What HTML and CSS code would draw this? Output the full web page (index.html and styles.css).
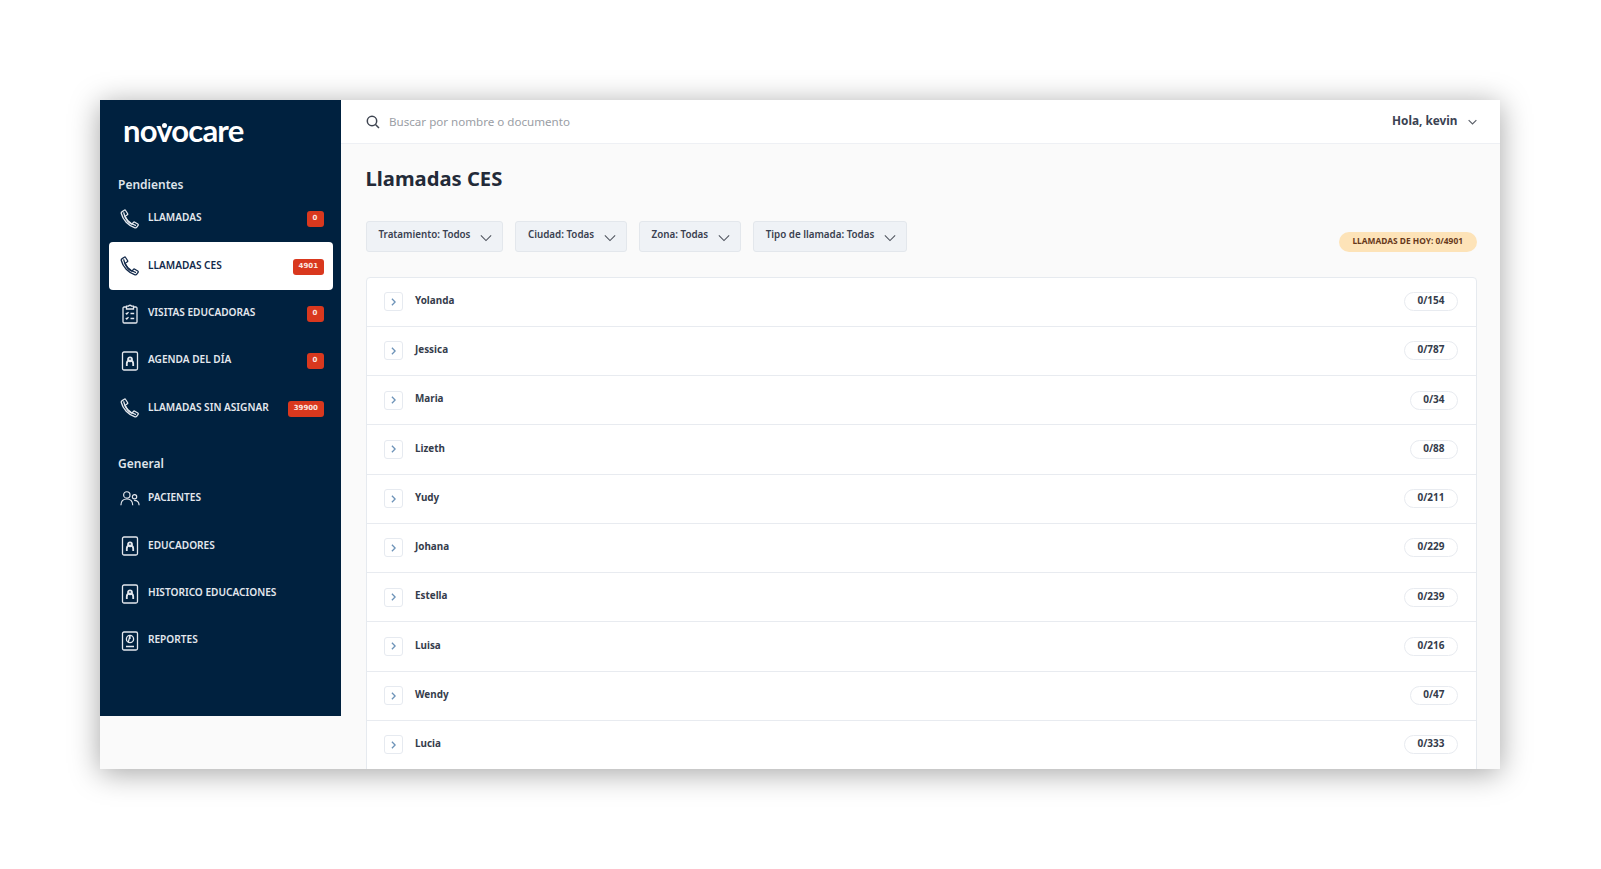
FILE: index.html
```html
<!DOCTYPE html>
<html lang="es">
<head>
<meta charset="utf-8">
<title>Novocare - Llamadas CES</title>
<link rel="stylesheet" href="styles.css">
</head>
<body>
<svg class="defs" width="0" height="0" aria-hidden="true">
  <symbol id="i-phone" viewBox="0 0 20 20"><path d="M2.200 2.600 4.300 1.200c.5-.3 1-.2 1.300.3l1.900 3c.3.500.2 1-.2 1.300L5.600 7c-.3.200-.4.600-.3 1 .9 2.600 3.300 5.500 6 7 .4.200.8.100 1-.2l1.100-1.400c.4-.4.900-.5 1.400-.2l3 1.800c.5.300.6.900.3 1.300l-1.300 1.900c-.4.600-1.100.8-1.800.6C8.300 16.800 2.800 10.800 1.300 4.500c-.2-.7.200-1.500.9-1.900Z"/><path d="M3.600 3.300C4.300 8.600 9.500 15 16 16.600"/></symbol>
  <symbol id="i-clip" viewBox="0 0 20 20"><path d="M6.500 3H4.200c-.7 0-1.200.5-1.200 1.200v13.600c0 .7.500 1.200 1.200 1.200h11.600c.7 0 1.200-.5 1.200-1.200V4.200c0-.7-.5-1.200-1.200-1.200h-2.300"/><path d="M6.500 2.200h2c.2-1.300 2.800-1.300 3 0h2v2.800h-7Z"/><path d="m5.800 9 1 1 1.700-1.900M5.800 14l1 1 1.700-1.900M10.500 9.500h3.700M10.500 14.500h3.700"/></symbol>
  <symbol id="i-book" viewBox="0 0 20 20"><rect x="2.500" y="1" width="15" height="18" rx="1.500"/><path class="thick" d="M6.800 15v-2.500a3.200 3.200 0 0 1 6.400 0V15"/><circle class="thick" cx="10" cy="8.300" r="2"/></symbol>
  <symbol id="i-people" viewBox="0 0 22 18"><circle cx="7.500" cy="4.500" r="3.500"/><path d="M1 16c0-4.500 2.800-7 6.500-7s6.500 2.500 6.500 7"/><circle cx="16" cy="6.500" r="2.400"/><path d="M15.500 10.500c3 0 5.500 1.800 5.500 5.500"/></symbol>
  <symbol id="i-report" viewBox="0 0 20 20"><rect x="2.500" y="1" width="15" height="18" rx="1.500"/><circle cx="10" cy="8" r="3.600"/><path d="M10 8V4.400L8.300 11.200M6 15.500h8"/></symbol>
  <symbol id="i-down" viewBox="0 0 14 8"><path d="m1 1 6 6 6-6"/></symbol>
  <symbol id="i-right" viewBox="0 0 6 10"><path d="m1 1 4 4-4 4"/></symbol>
</svg>

<div class="shell">
  <aside class="sidebar">
    <div class="logo">novocare<span class="logo-dot"></span></div>

    <h2 class="nav-title">Pendientes</h2>
    <nav class="nav">
      <a class="nav-item"><svg class="nav-icon"><use href="#i-phone"/></svg><span class="nav-text">LLAMADAS</span><span class="badge">0</span></a>
      <a class="nav-item active"><svg class="nav-icon"><use href="#i-phone"/></svg><span class="nav-text">LLAMADAS CES</span><span class="badge">4901</span></a>
      <a class="nav-item"><svg class="nav-icon"><use href="#i-clip"/></svg><span class="nav-text">VISITAS EDUCADORAS</span><span class="badge">0</span></a>
      <a class="nav-item"><svg class="nav-icon"><use href="#i-book"/></svg><span class="nav-text">AGENDA DEL DÍA</span><span class="badge">0</span></a>
      <a class="nav-item"><svg class="nav-icon"><use href="#i-phone"/></svg><span class="nav-text">LLAMADAS SIN ASIGNAR</span><span class="badge">39900</span></a>
    </nav>

    <h2 class="nav-title general">General</h2>
    <nav class="nav">
      <a class="nav-item"><svg class="nav-icon"><use href="#i-people"/></svg><span class="nav-text">PACIENTES</span></a>
      <a class="nav-item"><svg class="nav-icon"><use href="#i-book"/></svg><span class="nav-text">EDUCADORES</span></a>
      <a class="nav-item"><svg class="nav-icon"><use href="#i-book"/></svg><span class="nav-text">HISTORICO EDUCACIONES</span></a>
      <a class="nav-item"><svg class="nav-icon"><use href="#i-report"/></svg><span class="nav-text">REPORTES</span></a>
    </nav>
  </aside>

  <div class="main">
    <header class="topbar">
      <svg class="search-icon" viewBox="0 0 14 14"><circle cx="6" cy="6" r="4.700"/><path d="m9.500 9.500 3.500 3.500"/></svg>
      <span class="search-text">Buscar por nombre o documento</span>
      <span class="user">Hola, kevin</span>
      <svg class="user-chev"><use href="#i-down"/></svg>
    </header>

    <section class="content">
      <h1 class="title">Llamadas CES</h1>
      <div class="toolbar">
        <button class="filter"><span class="filter-text">Tratamiento: Todos</span><svg class="filter-chev"><use href="#i-down"/></svg></button>
        <button class="filter"><span class="filter-text">Ciudad: Todas</span><svg class="filter-chev"><use href="#i-down"/></svg></button>
        <button class="filter"><span class="filter-text">Zona: Todas</span><svg class="filter-chev"><use href="#i-down"/></svg></button>
        <button class="filter"><span class="filter-text">Tipo de llamada: Todas</span><svg class="filter-chev"><use href="#i-down"/></svg></button>
        <span class="today">LLAMADAS DE HOY: 0/4901</span>
      </div>
      <div class="list">
        <div class="row"><span class="expand"><svg><use href="#i-right"/></svg></span><span class="name">Yolanda</span><span class="count">0/154</span></div>
        <div class="row"><span class="expand"><svg><use href="#i-right"/></svg></span><span class="name">Jessica</span><span class="count">0/787</span></div>
        <div class="row"><span class="expand"><svg><use href="#i-right"/></svg></span><span class="name">Maria</span><span class="count">0/34</span></div>
        <div class="row"><span class="expand"><svg><use href="#i-right"/></svg></span><span class="name">Lizeth</span><span class="count">0/88</span></div>
        <div class="row"><span class="expand"><svg><use href="#i-right"/></svg></span><span class="name">Yudy</span><span class="count">0/211</span></div>
        <div class="row"><span class="expand"><svg><use href="#i-right"/></svg></span><span class="name">Johana</span><span class="count">0/229</span></div>
        <div class="row"><span class="expand"><svg><use href="#i-right"/></svg></span><span class="name">Estella</span><span class="count">0/239</span></div>
        <div class="row"><span class="expand"><svg><use href="#i-right"/></svg></span><span class="name">Luisa</span><span class="count">0/216</span></div>
        <div class="row"><span class="expand"><svg><use href="#i-right"/></svg></span><span class="name">Wendy</span><span class="count">0/47</span></div>
        <div class="row"><span class="expand"><svg><use href="#i-right"/></svg></span><span class="name">Lucia</span><span class="count">0/333</span></div>
      </div>
    </section>
  </div>
</div>
</body>
</html>
```
FILE: styles.css
```css
* { box-sizing: border-box; }
html, body { height: 100%; }
body {
  margin: 0;
  padding: 100px 101.5px 0 100px;
  background: #fff;
  font-family: "Noto Sans", "Open Sans", sans-serif;
  overflow: hidden;
}
.defs { display: block; height: 0; }
.shell {
  display: flex;
  align-items: flex-start;
  height: 669px;
  background: #fafafa;
  overflow: hidden;
  box-shadow: 0 4px 28px rgba(0, 0, 0, .36);
}

.sidebar {
  flex: 0 0 241px;
  height: 616px;
  background: #00213f;
  padding: 0 8.500px;
  color: #e9edf2;
}
.logo {
  position: relative;
  margin: 13px 0 0 14.500px;
  height: 34px;
  font-family: Lato, "Noto Sans", sans-serif;
  font-size: 31px;
  font-weight: 700;
  line-height: 34px;
  letter-spacing: -.8px;
  color: #fff;
}
.logo-dot {
  position: absolute;
  left: 38.500px;
  top: 10px;
  width: 5px;
  height: 5px;
  border-radius: 50%;
  background: #fff;
}
.nav-title {
  margin: 30px 0 2.500px 9.500px;
  height: 16px;
  font-size: 12px;
  font-weight: 600;
  line-height: 16px;
  color: #dfe4ea;
}
.nav-title.general { margin: 24px 0 3.500px 9.500px; }
.nav-item {
  display: flex;
  align-items: center;
  height: 47.300px;
  padding: 0 9px 0 11px;
  border-radius: 4px;
  color: #e4e8ee;
}
.nav-item.active {
  height: 48px;
  margin: -.35px 0;
  background: #fff;
  color: #12294a;
}
.nav-icon {
  flex: none;
  width: 20px;
  height: 20px;
  fill: none;
  stroke: currentColor;
  stroke-width: 1.300;
}
.thick { stroke-width: 1.800; }
.nav-text {
  flex: 1;
  margin: -3.500px 0 0 8.500px;
  font-size: 10.100px;
  font-weight: 600;
  line-height: 14px;
  white-space: nowrap;
}
.badge {
  flex: none;
  min-width: 17px;
  padding: 0 5.500px;
  height: 16px;
  margin-top: .5px;
  border-radius: 3px;
  background: #d9381e;
  color: #fbe6e0;
  font-family: "DejaVu Sans", sans-serif;
  font-size: 7px;
  font-weight: 700;
  line-height: 14px;
  text-align: center;
}

.main {
  flex: 1;
  min-width: 0;
  height: 100%;
  display: flex;
  flex-direction: column;
}
.topbar {
  flex: none;
  display: flex;
  align-items: center;
  height: 44px;
  padding: 0 23px 0 25px;
  background: #fff;
  border-bottom: 1px solid #eef0f4;
}
.search-icon {
  flex: none;
  width: 14px;
  height: 14px;
  fill: none;
  stroke: #3e4450;
  stroke-width: 1.500;
}
.search-text {
  flex: 1;
  margin: -1px 0 0 9px;
  font-size: 11.600px;
  color: #9a9ea5;
}
.user {
  margin-top: -2.500px;
  font-size: 11.800px;
  font-weight: 700;
  color: #3b4252;
}
.user-chev {
  flex: none;
  width: 9px;
  height: 6px;
  margin-left: 10px;
  fill: none;
  stroke: #5a5f68;
  stroke-width: 1.800;
}

.content {
  flex: 1;
  min-height: 0;
  padding: 0 23px 0 24.500px;
}
.title {
  margin: 18px 0 0;
  height: 32px;
  font-size: 20.200px;
  font-weight: 700;
  line-height: 32px;
  color: #232a38;
}
.toolbar {
  display: flex;
  align-items: center;
  gap: 12px;
  margin-top: 26.500px;
  height: 32px;
}
.filter {
  display: flex;
  align-items: center;
  height: 31px;
  padding: 0 10px 0 12px;
  border: 1px solid #e3e7ec;
  border-radius: 3px;
  background: #eff2f6;
  font: 600 9.800px/14px "Noto Sans", sans-serif;
  color: #3a4150;
  white-space: nowrap;
}
.filter-text { margin-top: -3px; }
.filter-chev {
  width: 12px;
  height: 8px;
  margin: 3px 0 0 9.500px;
  fill: none;
  stroke: #4c515b;
  stroke-width: 1.200;
}
.today {
  margin: 11px 0 0 auto;
  height: 19.500px;
  padding: 0 13.500px;
  border-radius: 10px;
  background: #fde3b8;
  font-size: 8.400px;
  font-weight: 700;
  line-height: 18px;
  color: #67391c;
}
.list {
  margin-top: 24px;
  background: #fff;
  border: 1px solid #e6eaef;
  border-radius: 4px 4px 0 0;
}
.row {
  display: flex;
  align-items: center;
  height: 49.250px;
  padding: 0 18px 0 17.500px;
  border-bottom: 1px solid #e8ebf0;
}
.expand {
  flex: none;
  display: flex;
  align-items: center;
  justify-content: center;
  width: 19px;
  height: 19px;
  border: 1px solid #e6eaf0;
  border-radius: 3px;
}
.expand svg {
  width: 5px;
  height: 8px;
  fill: none;
  stroke: #6d93b8;
  stroke-width: 1.600;
}
.name {
  flex: 1;
  margin: -3.500px 0 0 12px;
  font-size: 9.900px;
  font-weight: 700;
  line-height: 14px;
  color: #353c4b;
}
.count {
  flex: none;
  height: 19px;
  padding: 0 12px;
  border: 1px solid #e8ebf0;
  border-radius: 10px;
  font-size: 10px;
  font-weight: 700;
  line-height: 15px;
  color: #353c4b;
}
```
